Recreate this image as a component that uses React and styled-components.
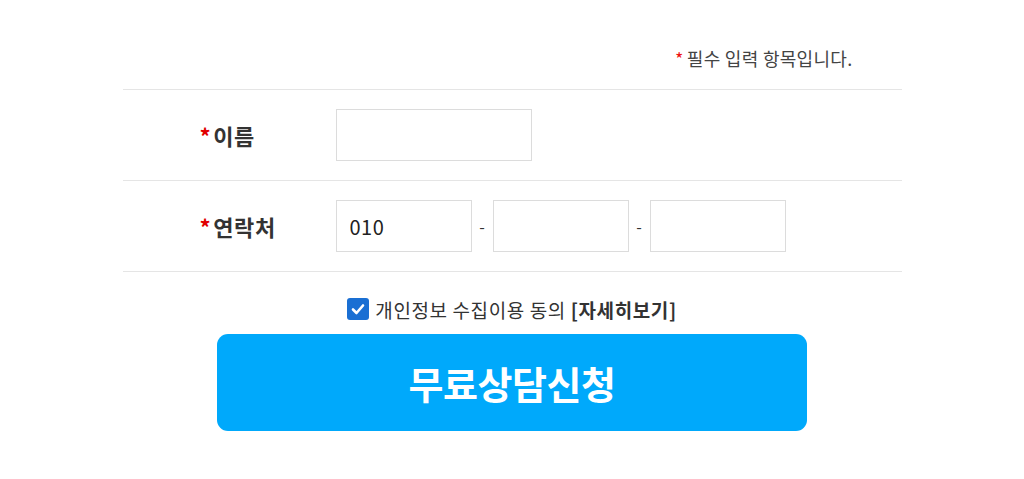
import React from "react";
import styled, { createGlobalStyle } from "styled-components";

const GlobalStyle = createGlobalStyle`
  html, body {
    margin: 0;
    padding: 0;
    background: #fff;
  }
  body {
    font-family: "Noto Sans CJK KR", "Noto Sans", sans-serif;
    color: #333;
  }
`;

const Wrapper = styled.div`
  width: 779px;
  margin: 0 auto;
  padding-top: 42px;
`;

const Notice = styled.p`
  margin: 0;
  height: 33px;
  padding: 0 49px 14px 0;
  text-align: right;
  font-size: 18px;
  line-height: 33px;
  letter-spacing: 0.3px;
  color: #444;
  span {
    color: #e11;
    margin-right: 3px;
  }
`;

const Table = styled.div`
  border-top: 1px solid #e5e5e5;
`;

const Row = styled.div`
  display: grid;
  grid-template-columns: 213px 1fr;
  align-items: center;
  height: 90px;
  border-bottom: 1px solid #e5e5e5;
`;

const Label = styled.div`
  padding-left: 77px;
  font-size: 22px;
  font-weight: 700;
  color: #333;
  letter-spacing: 0.6px;
  span {
    color: #e10000;
    margin-right: 2px;
  }
`;

const Fields = styled.div`
  display: flex;
  align-items: center;
`;

const Input = styled.input`
  box-sizing: border-box;
  width: ${(p) => p.$w}px;
  height: 52px;
  border: 1px solid #dcdcdc;
  padding: 0 13px;
  font-family: "Noto Sans CJK KR", "Noto Sans", sans-serif;
  font-size: 20px;
  letter-spacing: 0.5px;
  color: #222;
  outline: none;
`;

const Dash = styled.span`
  width: 21px;
  text-align: center;
  font-size: 16px;
  color: #333;
`;

const Agree = styled.label`
  display: flex;
  align-items: center;
  justify-content: center;
  gap: 6px;
  margin: 24px 0 0;
  height: 26px;
  font-size: 19px;
  color: #333;
  letter-spacing: 0.6px;
  b {
    font-weight: 700;
  }
`;

const Check = styled.span`
  display: inline-flex;
  align-items: center;
  justify-content: center;
  width: 22px;
  height: 22px;
  border-radius: 3px;
  background: #1a6fd3;
`;

const SubmitButton = styled.button`
  display: block;
  width: 590px;
  height: 97px;
  margin: 12px auto 0;
  border: none;
  border-radius: 11px;
  background: #00a9fb;
  color: #fff;
  font-family: "Noto Sans CJK KR", "Noto Sans", sans-serif;
  font-size: 38px;
  font-weight: 700;
  letter-spacing: -0.5px;
  cursor: pointer;
`;

const App = () => {
  return (
    <>
      <GlobalStyle />
      <Wrapper>
        <Notice>
          <span>*</span>필수 입력 항목입니다.
        </Notice>
        <Table>
          <Row>
            <Label>
              <span>*</span>이름
            </Label>
            <Fields>
              <Input $w={196} type="text" />
            </Fields>
          </Row>
          <Row>
            <Label>
              <span>*</span>연락처
            </Label>
            <Fields>
              <Input $w={136} type="text" defaultValue="010" />
              <Dash>-</Dash>
              <Input $w={136} type="text" />
              <Dash>-</Dash>
              <Input $w={136} type="text" />
            </Fields>
          </Row>
        </Table>
        <Agree>
          <Check>
            <svg width="16" height="16" viewBox="0 0 16 16">
              <path
                d="M3 8.5 L6.5 12 L13 4.5"
                fill="none"
                stroke="#fff"
                strokeWidth="2.6"
                strokeLinecap="round"
                strokeLinejoin="round"
              />
            </svg>
          </Check>
          <span>
            개인정보 수집이용 동의 <b>[자세히보기]</b>
          </span>
        </Agree>
        <SubmitButton type="button">무료상담신청</SubmitButton>
      </Wrapper>
    </>
  );
};

export default App;
